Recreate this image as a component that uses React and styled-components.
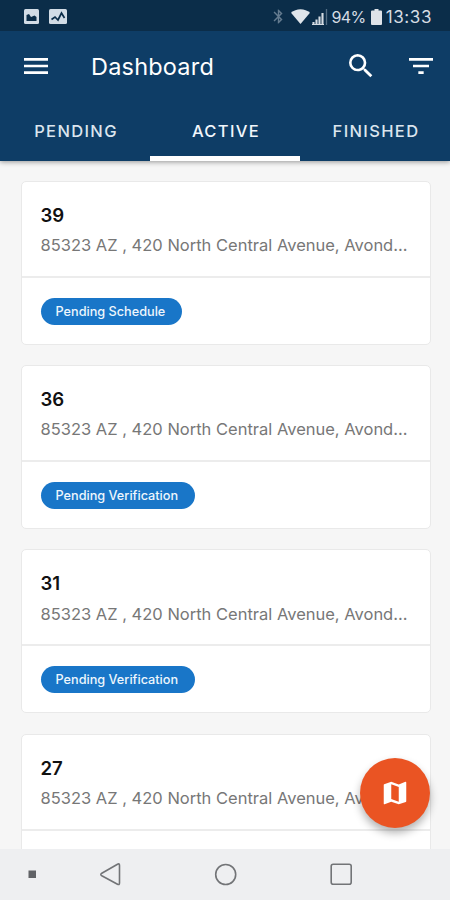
import React from "react";
import styled, { createGlobalStyle } from "styled-components";
import {
  MdBluetooth,
  MdFilterList,
  MdMap,
  MdMenu,
  MdSearch,
} from "react-icons/md";

const GlobalStyle = createGlobalStyle`
  * {
    box-sizing: border-box;
  }

  body {
    margin: 0;
    overflow: hidden;
    font-family: Inter, "Liberation Sans", sans-serif;
  }
`;

const Screen = styled.div`
  position: relative;
  display: flex;
  flex-direction: column;
  width: 450px;
  height: 900px;
  overflow: hidden;
  background-color: #f6f6f6;
`;

const Header = styled.header`
  flex: none;
  z-index: 1;
  height: 160.5px;
  background-color: #0e3d66;
  box-shadow: 0 1px 5px rgba(0, 0, 0, 0.4);
`;

const StatusBar = styled.div`
  display: flex;
  justify-content: space-between;
  align-items: center;
  height: 31px;
  padding: 2px 18px 0 24px;
  background-color: #0b2d49;
  color: #d5dce3;
`;

const Notifications = styled.div`
  display: flex;
  gap: 10px;
`;

const Indicators = styled.div`
  display: flex;
  align-items: center;
`;

const BluetoothIcon = styled(MdBluetooth)`
  margin-right: 4px;
  color: #647b8f;
`;

const StatusText = styled.span`
  margin-left: 4px;
  margin-right: ${(props) => props.$right || 0}px;
  font-size: ${(props) => props.$size}px;
  line-height: 20px;
  letter-spacing: ${(props) => props.$spacing}px;
`;

const Toolbar = styled.div`
  display: flex;
  align-items: center;
  height: 69px;
  padding: 0 13px 0 20px;
  color: #fff;
`;

const Title = styled.h1`
  flex: 1;
  margin: 2px 0 0 39px;
  font-size: 23.5px;
  font-weight: 400;
  letter-spacing: 0.2px;
`;

const IconButton = styled.button`
  display: flex;
  width: 32px;
  height: 32px;
  margin-left: ${(props) => props.$gap || 0}px;
  padding: 0;
  border: 0;
  background: none;
  color: inherit;
`;

const Tabs = styled.nav`
  display: grid;
  grid-template-columns: repeat(3, 1fr);
  height: 60.5px;
`;

const Tab = styled.div`
  display: flex;
  align-items: center;
  justify-content: center;
  padding: 7px 0 0 2px;
  border-bottom: 5.5px solid ${(props) => (props.$active ? "#fff" : "transparent")};
  color: ${(props) => (props.$active ? "#f1f6fb" : "#dbe5ee")};
  font-size: 16.5px;
  font-weight: 500;
  letter-spacing: 1.35px;
`;

const List = styled.main`
  flex: 1;
  display: flex;
  flex-direction: column;
  gap: 20.3px;
  min-height: 0;
  padding: 20.2px 19.5px 0 20.5px;
  overflow: hidden;
`;

const Card = styled.article`
  flex: none;
  height: 164px;
  border: 1.5px solid #e9e9e9;
  border-radius: 5px;
  background-color: #fff;
`;

const CardInfo = styled.div`
  height: 96px;
  padding: 21px 19px 0;
  border-bottom: 2px solid #ececec;
`;

const JobNumber = styled.h2`
  margin: 0;
  color: #111;
  font-size: 18.6px;
  font-weight: 600;
  line-height: 25px;
`;

const Address = styled.p`
  margin: 5.5px 0 0;
  color: #777;
  font-size: 16.5px;
  line-height: 25px;
  white-space: nowrap;
`;

const Status = styled.span`
  display: inline-flex;
  align-items: center;
  height: 27px;
  margin: 20px 0 0 19px;
  padding: 0 17px 0 15px;
  border-radius: 14px;
  background-color: #1976c8;
  color: #eef6fd;
  font-size: 12.7px;
  font-weight: 500;
  white-space: nowrap;
`;

const MapButton = styled.button`
  position: absolute;
  right: 20px;
  bottom: 72px;
  z-index: 2;
  display: flex;
  align-items: center;
  justify-content: center;
  width: 70px;
  height: 70px;
  padding: 0;
  border: 0;
  border-radius: 50%;
  background-color: #ea5423;
  color: #fff;
  box-shadow: 0 5px 9px rgba(0, 0, 0, 0.3);
`;

const SystemNav = styled.footer`
  flex: none;
  height: 51px;
  background-color: #eeeff1;
`;

const PictureIcon = () => (
  <svg width="15" height="15" viewBox="0 0 15 15">
    <rect width="15" height="15" rx="1.5" fill="#d2dce6" />
    <path d="M2.5 12V6L5 5l2 3 3.5-1.5 2 1.5v4z" fill="#0b2d49" />
  </svg>
);

const ActivityIcon = () => (
  <svg width="18" height="15" viewBox="0 0 18 15">
    <rect width="18" height="15" rx="1.5" fill="#d2dce6" />
    <path
      d="M2.5 10.5 6 8l3 3 3.5-7 3 5"
      fill="none"
      stroke="#0b2d49"
      strokeWidth="1.7"
    />
  </svg>
);

const WifiIcon = () => (
  <svg width="19" height="15" viewBox="0 0 19 15">
    <path d="M0 3.8C5-.9 14-.9 19 3.8L9.5 15z" fill="#e0e5ea" />
  </svg>
);

const SignalIcon = styled.svg`
  margin-left: 2px;
`;

const Signal = () => (
  <SignalIcon width="16" height="16" viewBox="0 0 16 16">
    <path
      d="M1.5 13v3M4.5 10.5V16M7.5 7.5V16M10.5 4v12"
      stroke="#d5dce3"
      strokeWidth="2.1"
    />
    <path d="M0 15.5h12" stroke="#d5dce3" strokeWidth="1" />
    <path d="M14.5 0v16" stroke="#536e84" strokeWidth="1.3" />
  </SignalIcon>
);

const BatteryIcon = () => (
  <svg width="11" height="16" viewBox="0 0 11 16">
    <path
      d="M3.5 0h4v1.5H10a1 1 0 0 1 1 1V15a1 1 0 0 1-1 1H1a1 1 0 0 1-1-1V2.5a1 1 0 0 1 1-1h2.5z"
      fill="#dfe3e8"
    />
  </svg>
);

const NavIcons = () => (
  <svg width="450" height="51" viewBox="0 0 450 51">
    <rect x="28.5" y="21.5" width="7.5" height="7.5" fill="#606266" />
    <g fill="none" stroke="#727477" strokeWidth="1.6" strokeLinejoin="round">
      <path d="M101.8 24.2 117.5 15.2Q119.5 14.2 119.5 16.5V34Q119.5 36.3 117.5 35.2L101.8 26.7Q99.8 25.5 101.8 24.2Z" />
      <circle cx="225.7" cy="25.5" r="10" />
      <rect x="331.2" y="15.3" width="20" height="20" rx="2" />
    </g>
  </svg>
);

const tabs = ["PENDING", "ACTIVE", "FINISHED"];

const jobs = [
  { number: 39, status: "Pending Schedule" },
  { number: 36, status: "Pending Verification" },
  { number: 31, status: "Pending Verification" },
  { number: 27 },
];

const App = () => {
  return (
    <>
      <GlobalStyle />
      <Screen>
        <Header>
          <StatusBar>
            <Notifications>
              <PictureIcon />
              <ActivityIcon />
            </Notifications>
            <Indicators>
              <BluetoothIcon size={17} />
              <WifiIcon />
              <Signal />
              <StatusText $size={16} $right={5} $spacing={-0.6}>
                94%
              </StatusText>
              <BatteryIcon />
              <StatusText $size={17} $spacing={0.6}>
                13:33
              </StatusText>
            </Indicators>
          </StatusBar>
          <Toolbar>
            <IconButton aria-label="Menu">
              <MdMenu size={32} />
            </IconButton>
            <Title>Dashboard</Title>
            <IconButton aria-label="Search">
              <MdSearch size={32} />
            </IconButton>
            <IconButton aria-label="Filter" $gap={28}>
              <MdFilterList size={32} />
            </IconButton>
          </Toolbar>
          <Tabs>
            {tabs.map((tab) => (
              <Tab key={tab} $active={tab === "ACTIVE"}>
                {tab}
              </Tab>
            ))}
          </Tabs>
        </Header>
        <List>
          {jobs.map((job) => (
            <Card key={job.number}>
              <CardInfo>
                <JobNumber>{job.number}</JobNumber>
                <Address>85323 AZ , 420 North Central Avenue, Avond...</Address>
              </CardInfo>
              {job.status && <Status>{job.status}</Status>}
            </Card>
          ))}
        </List>
        <MapButton aria-label="Map">
          <MdMap size={30} />
        </MapButton>
        <SystemNav>
          <NavIcons />
        </SystemNav>
      </Screen>
    </>
  );
};

export default App;
